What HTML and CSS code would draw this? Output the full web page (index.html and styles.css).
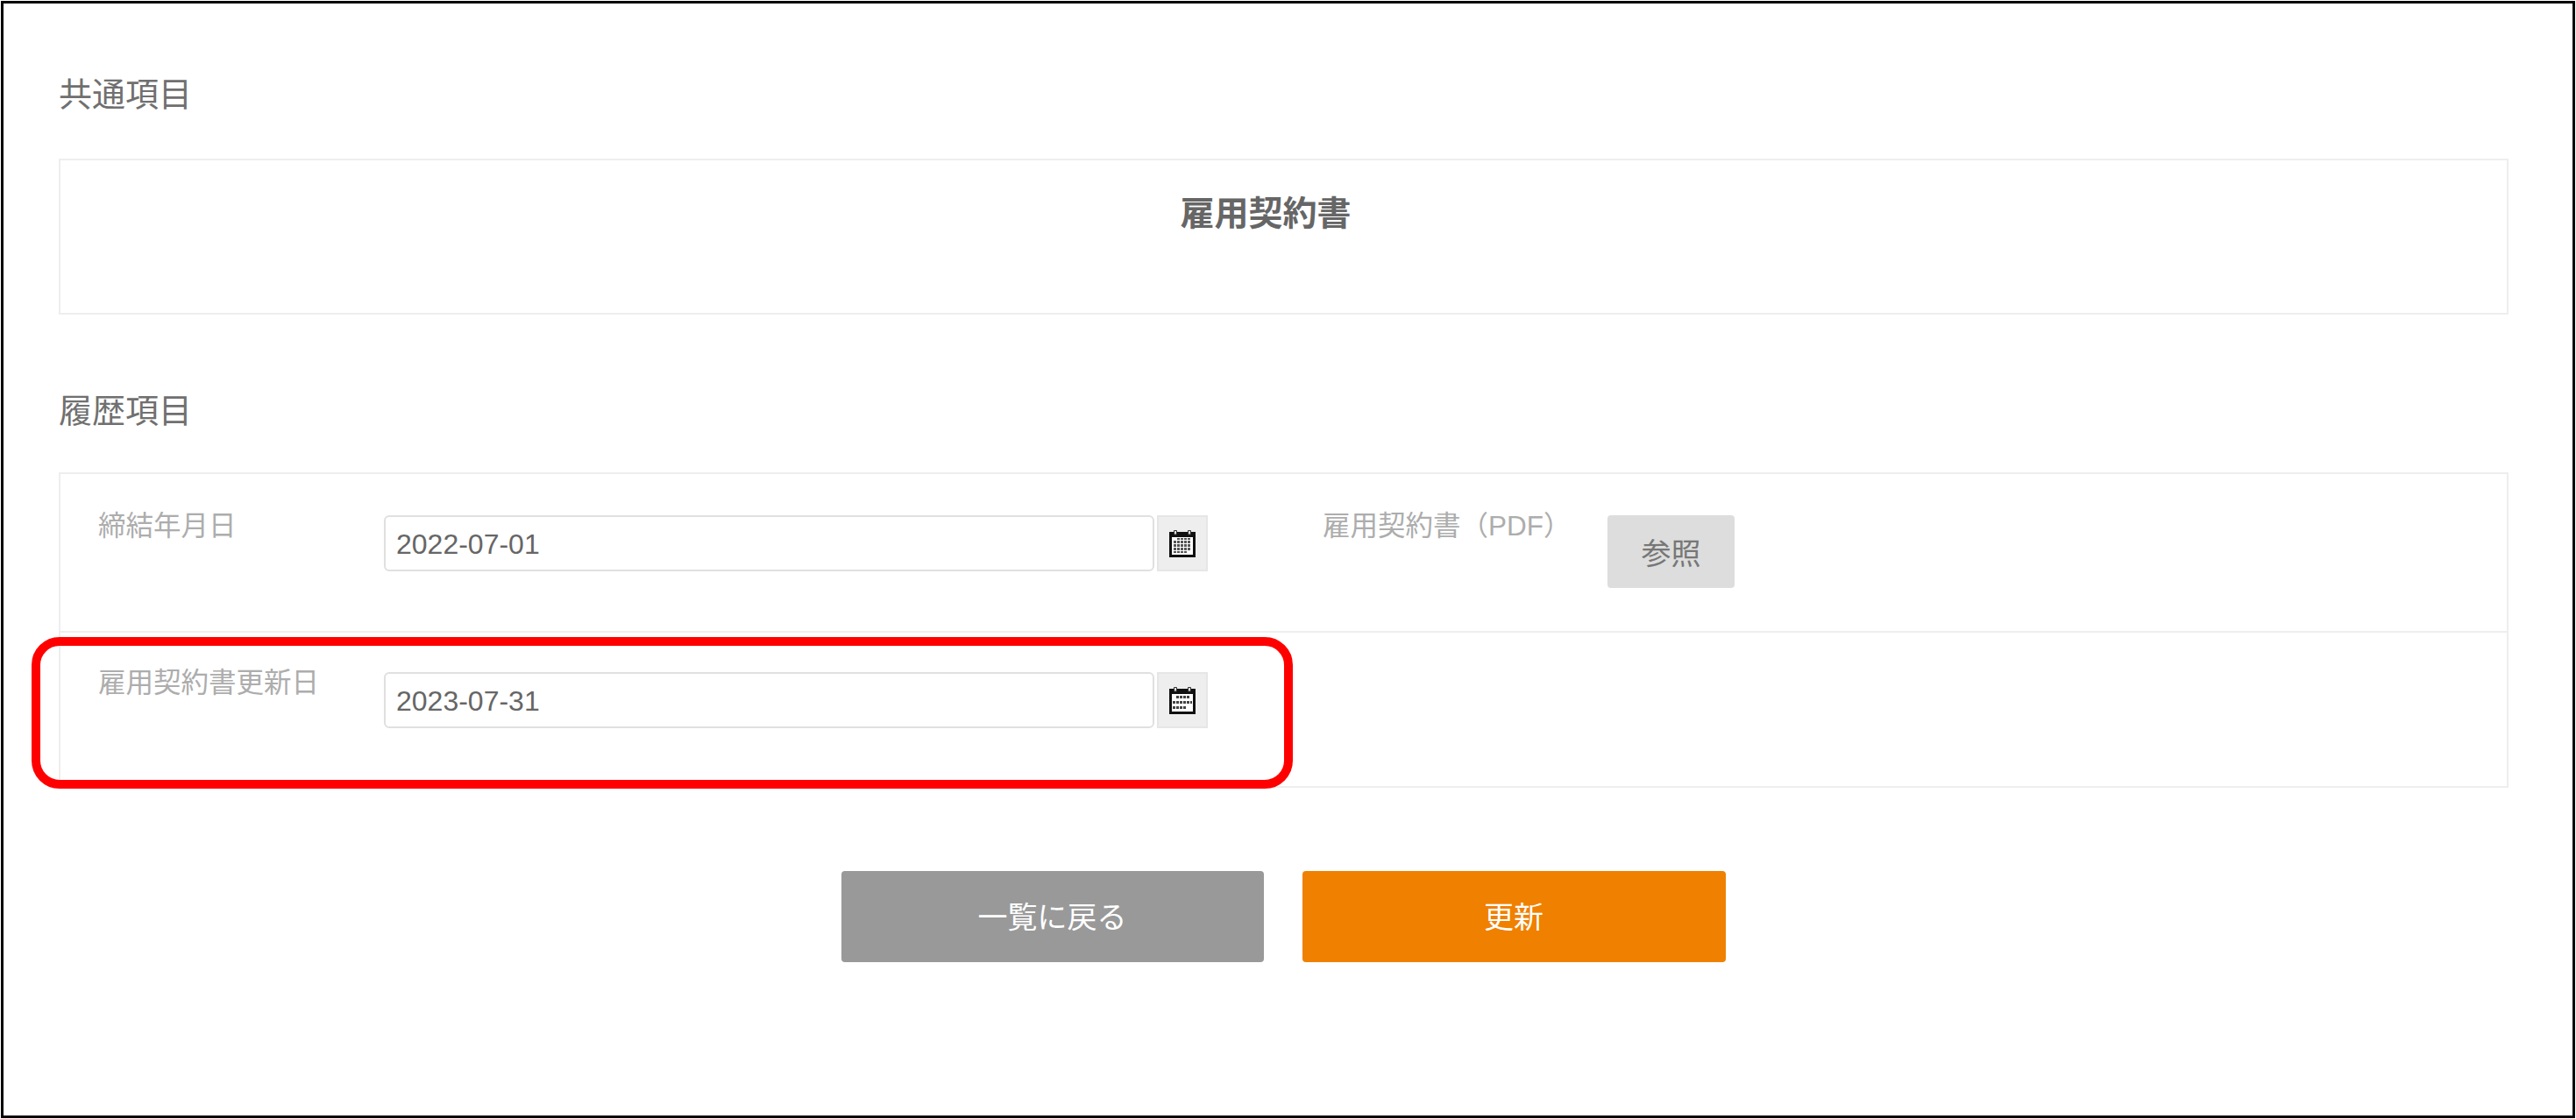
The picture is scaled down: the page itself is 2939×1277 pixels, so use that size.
FILE: index.html
```html
<!DOCTYPE html>
<html lang="ja">
<head>
<meta charset="utf-8">
<title>雇用契約書</title>
<link rel="stylesheet" href="styles.css">
</head>
<body>
<svg class="defs" width="0" height="0" aria-hidden="true">
  <defs>
    <symbol id="cal-a" viewBox="0 0 30 31">
      <path d="M0 2h30v29H0z" fill="#111"/>
      <path d="M3 8h24v20H3z" fill="#fff"/>
      <path d="M5.500 5V.5h3V5zM21.500 5V.5h3V5z" fill="#ddd" stroke="#333" stroke-width="1"/>
      <g fill="#555">
        <path d="M9 9h3v2H9zM13 9h3v2h-3zM17 9h3v2h-3zM21 9h3v2h-3z"/>
        <path d="M5 12h3v3H5zM9 12h3v3H9zM13 12h3v3h-3zM17 12h3v3h-3zM21 12h3v3h-3z"/>
        <path d="M5 16h3v3H5zM9 16h3v3H9zM13 16h3v3h-3zM17 16h3v3h-3zM21 16h3v3h-3z"/>
        <path d="M5 20h3v3H5zM9 20h3v3H9zM13 20h3v3h-3zM17 20h3v3h-3zM21 20h3v3h-3z"/>
        <path d="M5 24h3v2H5zM9 24h3v2H9zM13 24h3v2h-3zM17 24h3v2h-3z"/>
      </g>
    </symbol>
    <symbol id="cal-b" viewBox="0 0 30 31">
      <path d="M0 2h30v29H0z" fill="#111"/>
      <path d="M3 8h24v20H3z" fill="#fff"/>
      <path d="M5.500 5V.5h3V5zM21.500 5V.5h3V5z" fill="#ddd" stroke="#333" stroke-width="1"/>
      <g fill="#444">
        <path d="M8 10h3v3H8zM12 10h3v3h-3zM16 10h3v3h-3zM20 10h3v3h-3z"/>
        <path d="M4 16h3v3H4zM8 16h3v3H8zM12 16h3v3h-3zM16 16h3v3h-3zM20 16h3v3h-3zM24 16h2v3h-2z"/>
        <path d="M4 22h3v3H4zM8 22h3v3H8zM12 22h3v3h-3zM16 22h3v3h-3z"/>
      </g>
    </symbol>
  </defs>
</svg>
<main class="frame">
  <h2 class="section-title">共通項目</h2>
  <section class="panel panel-common">
    <h1 class="doc-title">雇用契約書</h1>
  </section>

  <h2 class="section-title section-title-second">履歴項目</h2>
  <section class="panel">
    <div class="row row-first">
      <label class="field-label">締結年月日</label>
      <div class="date-field">
        <input class="date-input" type="text" value="2022-07-01" readonly>
        <button class="cal-button" type="button" aria-label="カレンダー"><svg class="cal-icon"><use href="#cal-a"/></svg></button>
      </div>
      <label class="field-label field-label-file">雇用契約書（PDF）</label>
      <button class="browse-button" type="button">参照</button>
    </div>
    <div class="row row-second">
      <label class="field-label">雇用契約書更新日</label>
      <div class="date-field">
        <input class="date-input" type="text" value="2023-07-31" readonly>
        <button class="cal-button" type="button" aria-label="カレンダー"><svg class="cal-icon"><use href="#cal-b"/></svg></button>
      </div>
    </div>
  </section>

  <div class="actions">
    <button class="action action-back" type="button">一覧に戻る</button>
    <button class="action action-update" type="button">更新</button>
  </div>

  <div class="callout"></div>
</main>
</body>
</html>
```

FILE: styles.css
```css
* { box-sizing: border-box; }

html, body {
  margin: 0;
  padding: 0;
  background: #fff;
}

body {
  width: 2939px;
  height: 1277px;
  overflow: hidden;
  font-family: "Liberation Sans", "Noto Sans CJK JP", sans-serif;
  color: #666;
}

.defs { position: absolute; }

.frame {
  position: relative;
  width: 2937px;
  height: 1275px;
  margin: 1px;
  border: 3px solid #000;
  padding: 80px 73px 0 63px;
}

.section-title {
  margin: 0 0 49px;
  font-size: 38px;
  line-height: 48px;
  font-weight: 400;
  color: #707070;
}

.section-title-second {
  margin: 86px 0 46px;
}

.panel {
  border: 2px solid #eee;
}

.panel-common {
  height: 178px;
  padding: 39px 41px 0 0;
}

.doc-title {
  margin: 0;
  text-align: center;
  font-size: 39px;
  line-height: 44px;
  font-weight: 700;
  color: #666;
}

.row {
  display: flex;
  align-items: flex-start;
  padding-left: 43px;
}

.row-first {
  height: 181px;
  padding-top: 39px;
  border-bottom: 2px solid #eee;
}

.row-second {
  height: 175px;
  padding-top: 37px;
}

.field-label {
  flex: none;
  width: 326px;
  font-size: 31.500px;
  line-height: 40px;
  color: #adadad;
}

.field-label-file {
  width: 325px;
  margin-left: 131px;
}

.date-field {
  flex: none;
  display: flex;
  gap: 3px;
  margin-top: 8px;
}

.date-input {
  width: 879px;
  height: 64px;
  padding: 2px 12px 0;
  border: 2px solid #e0e0e0;
  border-radius: 6px;
  background: #fff;
  font: 32px "Liberation Sans", sans-serif;
  color: #666;
  outline: none;
}

.cal-button {
  display: flex;
  align-items: center;
  justify-content: center;
  width: 58px;
  height: 64px;
  padding: 0;
  border: 2px solid #e6e6e6;
  background: #eee;
}

.cal-icon {
  width: 30px;
  height: 31px;
}

.browse-button {
  flex: none;
  width: 145px;
  height: 83px;
  margin-top: 8px;
  padding: 0;
  border: 0;
  border-radius: 4px;
  background: #ddd;
  font: 34px "Liberation Sans", "Noto Sans CJK JP", sans-serif;
  color: #777;
}

.actions {
  display: flex;
  justify-content: center;
  gap: 44px;
  margin: 95px 1px 0 0;
}

.action {
  height: 104px;
  padding: 0 0 4px;
  border: 0;
  border-radius: 4px;
  font: 34px "Liberation Sans", "Noto Sans CJK JP", sans-serif;
  color: #fff;
}

.action-back { width: 482px; background: #999; }
.action-update { width: 483px; background: #f08000; }

.callout {
  position: absolute;
  left: 32px;
  top: 723px;
  width: 1439px;
  height: 173px;
  border: 10px solid #f00;
  border-radius: 32px;
}
```
